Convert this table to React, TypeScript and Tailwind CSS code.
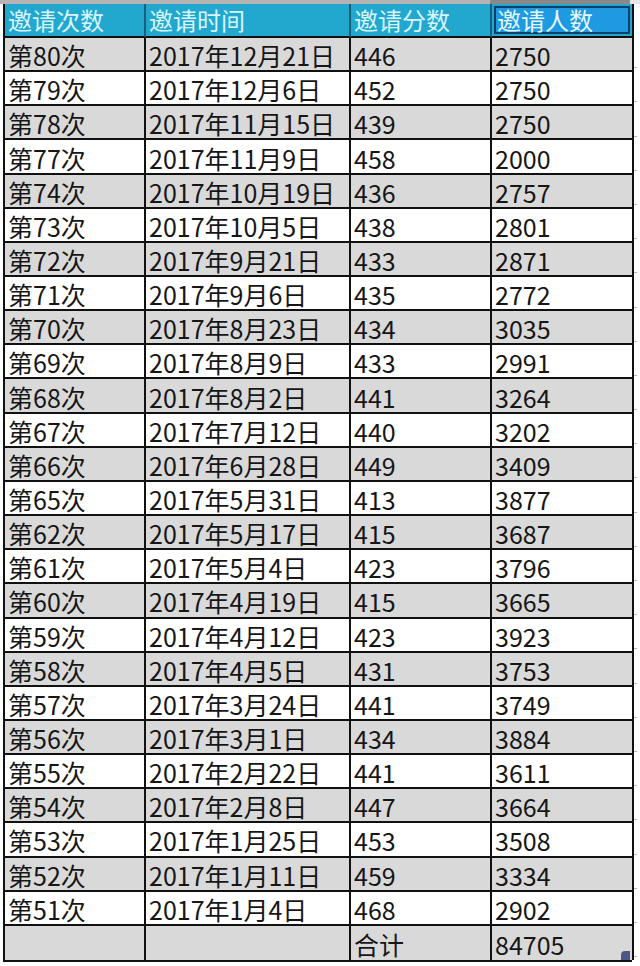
import React from "react";

const rows: [string, string, string, string][] = [
  ["第80次", "2017年12月21日", "446", "2750"],
  ["第79次", "2017年12月6日", "452", "2750"],
  ["第78次", "2017年11月15日", "439", "2750"],
  ["第77次", "2017年11月9日", "458", "2000"],
  ["第74次", "2017年10月19日", "436", "2757"],
  ["第73次", "2017年10月5日", "438", "2801"],
  ["第72次", "2017年9月21日", "433", "2871"],
  ["第71次", "2017年9月6日", "435", "2772"],
  ["第70次", "2017年8月23日", "434", "3035"],
  ["第69次", "2017年8月9日", "433", "2991"],
  ["第68次", "2017年8月2日", "441", "3264"],
  ["第67次", "2017年7月12日", "440", "3202"],
  ["第66次", "2017年6月28日", "449", "3409"],
  ["第65次", "2017年5月31日", "413", "3877"],
  ["第62次", "2017年5月17日", "415", "3687"],
  ["第61次", "2017年5月4日", "423", "3796"],
  ["第60次", "2017年4月19日", "415", "3665"],
  ["第59次", "2017年4月12日", "423", "3923"],
  ["第58次", "2017年4月5日", "431", "3753"],
  ["第57次", "2017年3月24日", "441", "3749"],
  ["第56次", "2017年3月1日", "434", "3884"],
  ["第55次", "2017年2月22日", "441", "3611"],
  ["第54次", "2017年2月8日", "447", "3664"],
  ["第53次", "2017年1月25日", "453", "3508"],
  ["第52次", "2017年1月11日", "459", "3334"],
  ["第51次", "2017年1月4日", "468", "2902"],
  ["", "", "合计", "84705"],
];

const font = { fontFamily: '"Noto Sans CJK SC", "Noto Sans", sans-serif' };

export default function App() {
  return (
    <div className="w-[640px] h-[966px] bg-white overflow-hidden relative" style={font}>
      {/* top strip (excel column headers remnants) */}
      <div className="h-[4px] flex">
        <div className="w-[490px] bg-[#b4b4b4]" />
        <div className="w-[140px] bg-[#8a8a8a]" />
        <div className="flex-1 bg-[#e6e6e6]" />
      </div>
      <div className="flex">
        <div className="w-[3px]" />
        <div className="w-[629px] h-[958px] grid grid-cols-[141px_205px_141px_142px] grid-rows-[34px_repeat(27,1fr)] border-l-2 border-b-2 border-[#111]">
          {/* header */}
          {["邀请次数", "邀请时间", "邀请分数"].map((h) => (
            <div
              key={h}
              className="bg-[#22a8cf] border-r-2 border-b-2 border-r-[#1a5f78] border-b-[#111] flex items-center pl-[3px] text-[24px] leading-none text-[#d8f6ff]"
            >
              {h}
            </div>
          ))}
          <div className="bg-[#22a8cf] border-r-2 border-b-2 border-[#111] flex">
            <div className="flex-1 m-[2px] bg-[#1d9ae2] border-2 border-[#0e3f6a] flex items-center pl-[1px] text-[24px] leading-none text-[#e4f8ff]">
              邀请人数
            </div>
          </div>
          {rows.map((r, i) => {
            const bg = i % 2 === 0 ? "bg-[#d9d9d9]" : "bg-white";
            return r.map((c, j) => (
              <div
                key={`${i}-${j}`}
                className={`${bg} border-r-2 ${i === rows.length - 1 ? "" : "border-b-2"} border-[#111] flex items-center pl-[3px] pt-[3px] text-[25px] leading-none text-[#161616]`}
              >
                {c}
              </div>
            ));
          })}
        </div>
        <div className="flex-1 flex flex-col pt-[30px]">
          {Array.from({ length: 27 }).map((_, i) => (
            <div key={i} className="h-[34.2px] flex items-end">
              <div className="ml-[2px] w-[3px] h-[1px] bg-[#b8b8b8]" />
            </div>
          ))}
        </div>
      </div>
      {/* fill handle blob */}
      <div className="absolute left-[621px] top-[951px] w-[9px] h-[9px] bg-[#2a3470] rounded-tl-[4px] opacity-80" />
    </div>
  );
}
